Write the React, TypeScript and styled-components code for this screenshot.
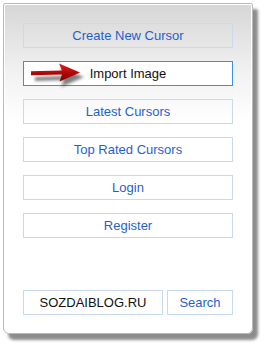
import React from "react";
import styled, { createGlobalStyle } from "styled-components";

const Global = createGlobalStyle`
  html, body { margin: 0; padding: 0; background: #ffffff; }
  body { font-family: Arial, "Liberation Sans", sans-serif; }
`;

const Page = styled.div`
  width: 270px;
  height: 353px;
  padding: 3px 0 0 3px;
  box-sizing: border-box;
`;

const Panel = styled.div`
  position: relative;
  width: 250px;
  height: 331px;
  box-sizing: border-box;
  border: 1px solid #b9b9b9;
  border-radius: 2px 2px 6px 6px;
  background: linear-gradient(to bottom, #d6d6d6 0px, #f2f2f2 70px, #ffffff 120px, #ffffff 100%);
  box-shadow: inset 1px 1px 0 #ffffff, inset -1px -1px 0 #ffffff, 5px 6px 3px rgba(0, 0, 0, 0.45);
  padding: 19px 19px 0 19px;
  display: flex;
  flex-direction: column;
`;

const Menu = styled.div`
  display: flex;
  flex-direction: column;
  gap: 13px;
`;

const MenuButton = styled.div<{ $active?: boolean }>`
  position: relative;
  height: 25px;
  box-sizing: border-box;
  border: 1px solid ${(p) => (p.$active ? "#3d8ee8" : "#c9daf0")};
  background: ${(p) => (p.$active ? "#ffffff" : "transparent")};
  color: ${(p) => (p.$active ? "#111111" : "#1f5fd0")};
  font-size: 13px;
  display: flex;
  align-items: center;
  justify-content: center;
  line-height: 1;
`;

const SearchRow = styled.div`
  margin-top: 52px;
  display: flex;
  gap: 4px;
`;

const SearchBox = styled.div`
  width: 140px;
  height: 25px;
  box-sizing: border-box;
  border: 1px solid #c9daf0;
  background: #ffffff;
  color: #111111;
  font-size: 13px;
  display: flex;
  align-items: center;
  justify-content: center;
`;

const SearchButton = styled(SearchBox)`
  width: 66px;
  color: #1f5fd0;
`;

const Arrow = styled.svg`
  position: absolute;
  left: 7px;
  top: 0px;
  overflow: visible;
`;

function RedArrow() {
  return (
    <Arrow width="52" height="26" viewBox="0 0 52 26">
      <defs>
        <linearGradient id="ar" x1="0" y1="0" x2="0" y2="1">
          <stop offset="0" stopColor="#e02020" />
          <stop offset="0.5" stopColor="#b50808" />
          <stop offset="1" stopColor="#7a0000" />
        </linearGradient>
        <filter id="sh" x="-20%" y="-50%" width="150%" height="200%">
          <feGaussianBlur stdDeviation="1.6" />
        </filter>
      </defs>
      <path
        d="M2 12 L30 11 L27 3 L51 12 L28 22 L31 15 L2 16 Z"
        fill="rgba(0,0,0,0.5)"
        transform="translate(2,3)"
        filter="url(#sh)"
      />
      <path d="M0 9.3 L31 8.6 L28 1.5 L49 10.5 L28.5 19.5 L31 12.6 L0 13.2 Z" fill="url(#ar)" />
    </Arrow>
  );
}

export default function App() {
  return (
    <>
      <Global />
      <Page>
        <Panel>
          <Menu>
            <MenuButton>Create New Cursor</MenuButton>
            <MenuButton $active>
              <RedArrow />
              Import Image
            </MenuButton>
            <MenuButton>Latest Cursors</MenuButton>
            <MenuButton>Top Rated Cursors</MenuButton>
            <MenuButton>Login</MenuButton>
            <MenuButton>Register</MenuButton>
          </Menu>
          <SearchRow>
            <SearchBox>SOZDAIBLOG.RU</SearchBox>
            <SearchButton>Search</SearchButton>
          </SearchRow>
        </Panel>
      </Page>
    </>
  );
}
